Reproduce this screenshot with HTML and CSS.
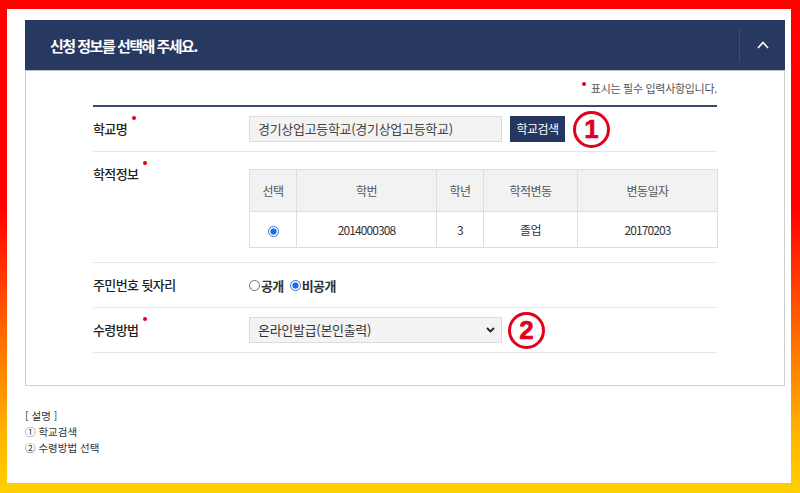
FILE: index.html
```html
<!DOCTYPE html>
<html lang="ko">
<head>
<meta charset="utf-8">
<title>신청 정보</title>
<link rel="stylesheet" href="styles.css">
</head>
<body>
<div class="frame">
  <div class="sheet">
    <section class="panel">
      <header class="panel-head">
        <h2 class="panel-title">신청 정보를 선택해 주세요.</h2>
        <div class="toggle">
          <svg width="12" height="8" viewBox="0 0 12 8"><path d="M1 7 L6 1.5 L11 7" fill="none" stroke="#fff" stroke-width="1.6"/></svg>
        </div>
      </header>
      <div class="panel-body">
        <div class="form">
          <p class="note"><span class="req"></span> 표시는 필수 입력사항입니다.</p>
          <div class="rows">
            <div class="row">
              <div class="label">학교명<span class="req"></span></div>
              <div class="field inline">
                <div class="input">경기상업고등학교(경기상업고등학교)</div>
                <span class="btn">학교검색</span>
                <span class="mark mark1">1</span>
              </div>
            </div>
            <div class="row">
              <div class="label">학적정보<span class="req"></span></div>
              <div class="field table-field">
                <table class="grid">
                  <colgroup>
                    <col class="c1"><col class="c2"><col class="c3"><col class="c4"><col class="c5">
                  </colgroup>
                  <thead>
                    <tr><th>선택</th><th>학번</th><th>학년</th><th>학적변동</th><th>변동일자</th></tr>
                  </thead>
                  <tbody>
                    <tr><td><span class="radio on"></span></td><td class="num">2014000308</td><td class="num">3</td><td>졸업</td><td class="num">20170203</td></tr>
                  </tbody>
                </table>
              </div>
            </div>
            <div class="row">
              <div class="label">주민번호 뒷자리</div>
              <div class="field inline">
                <span class="opt"><span class="radio"></span>공개</span>
                <span class="opt"><span class="radio on"></span>비공개</span>
              </div>
            </div>
            <div class="row">
              <div class="label">수령방법<span class="req"></span></div>
              <div class="field inline">
                <div class="input select">온라인발급(본인출력)
                  <svg class="caret" width="9" height="6" viewBox="0 0 9 6"><path d="M1 1 L4.5 4.5 L8 1" fill="none" stroke="#222" stroke-width="1.8"/></svg>
                </div>
                <span class="mark mark2">2</span>
              </div>
            </div>
          </div>
        </div>
      </div>
    </section>
    <div class="desc">
      <p>[ 설명 ]</p>
      <p>① 학교검색</p>
      <p>② 수령방법 선택</p>
    </div>
  </div>
</div>
</body>
</html>
```

FILE: styles.css
```css
* { box-sizing: border-box; }
html, body { margin: 0; padding: 0; }
body {
  font-family: "Noto Sans CJK KR", "Noto Sans", sans-serif;
  color: #333;
}
.frame {
  width: 800px;
  height: 493px;
  padding: 9px 9px 10px 7px;
  background: linear-gradient(to bottom, #ff0000 0%, #ff0000 42%, #ff7a00 72%, #ffb400 88%, #ffd000 100%);
}
.sheet {
  height: 100%;
  background: #fff;
  padding: 11px 6px 0 18px;
}
.panel { width: 760px; }
.panel-head {
  height: 50px;
  background: #283961;
  display: flex;
  align-items: center;
  justify-content: space-between;
}
.panel-title {
  margin: 0 0 0 25px;
  color: #fff;
  font-size: 15px;
  font-weight: 700;
  letter-spacing: -1.5px;
}
.toggle {
  width: 46px;
  height: 34px;
  border-left: 1px solid #3b4b72;
  display: flex;
  align-items: center;
  justify-content: center;
}
.panel-body {
  border: 1px solid #cfcfcf;
  border-top-color: #b9c0cc;
  padding: 10px 0 32px;
}
.form { width: 624px; margin: 0 auto; }
.note {
  margin: 0 0 10px;
  text-align: right;
  font-size: 11px;
  line-height: 14px;
  color: #555;
  letter-spacing: -0.3px;
}
.req {
  display: inline-block;
  width: 4px;
  height: 4px;
  border-radius: 50%;
  background: #e0001b;
  vertical-align: top;
  margin-left: 5px;
}
.note .req { margin: 0 2px 0 0; vertical-align: top; margin-top: 1px; }
.rows { border-top: 2px solid #3a4a6e; }
.row {
  display: flex;
  align-items: flex-start;
  padding: 9px 0 9px;
  border-bottom: 1px solid #e6e6e6;
}
.label {
  width: 156px;
  flex: none;
  font-size: 13px;
  font-weight: 500;
  line-height: 26px;
  color: #222;
  letter-spacing: -0.6px;
}
.field { flex: 1; }
.inline { display: flex; align-items: center; height: 26px; }
.table-field { padding: 8px 0 5px; }
.input {
  width: 253px;
  height: 26px;
  border: 1px solid #dcdcdc;
  background: #f3f3f3;
  font-size: 13px;
  line-height: 24px;
  padding: 0 8px;
  color: #444;
  letter-spacing: -0.3px;
}
.select {
  display: flex;
  justify-content: space-between;
  align-items: center;
  padding-right: 6px;
  color: #333;
}
.btn {
  margin-left: 8px;
  height: 26px;
  width: 55px;
  background: #253660;
  color: #fff;
  font-size: 12px;
  line-height: 26px;
  text-align: center;
  letter-spacing: -0.5px;
}
.mark {
  width: 37px;
  height: 37px;
  margin: -6px 0 -6px 8px;
  border: 3.5px solid #e3001b;
  border-radius: 50%;
  color: #e3001b;
  font-family: "Liberation Sans", Arial, sans-serif;
  font-weight: 700;
  font-size: 26px;
  line-height: 30px;
  text-align: center;
  -webkit-text-stroke: 0.6px #e3001b;
}
.mark2 { margin-left: 6px; }
.grid {
  width: 468px;
  border-collapse: collapse;
  table-layout: fixed;
  font-size: 12px;
  letter-spacing: -0.5px;
}
.c1 { width: 47px; } .c2 { width: 140px; } .c3 { width: 47px; } .c4 { width: 94px; } .c5 { width: 140px; }
.grid th, .grid td {
  border: 1px solid #dedede;
  text-align: center;
  padding: 0;
}
.grid th {
  height: 42px;
  background: #f2f2f2;
  font-weight: 400;
  color: #555;
}
.grid td { height: 36px; color: #333; }
.grid td.num { letter-spacing: -0.9px; }
.radio {
  display: inline-block;
  width: 11px;
  height: 11px;
  border-radius: 50%;
  border: 1px solid #6f6f6f;
  background: #fff;
  vertical-align: middle;
}
.radio.on {
  border-color: #2f6fd8;
  background: radial-gradient(circle, #1d6ae0 0 2.8px, #fff 3.4px);
}
.opt {
  display: inline-flex;
  align-items: center;
  font-size: 13px;
  font-weight: 700;
  color: #333;
  letter-spacing: -0.6px;
  margin-right: 6px;
}
.opt .radio { margin-right: 1px; }
.desc {
  margin-top: 22px;
  font-size: 10.5px;
  line-height: 16px;
  color: #333;
}
.desc p { margin: 0; }
```
